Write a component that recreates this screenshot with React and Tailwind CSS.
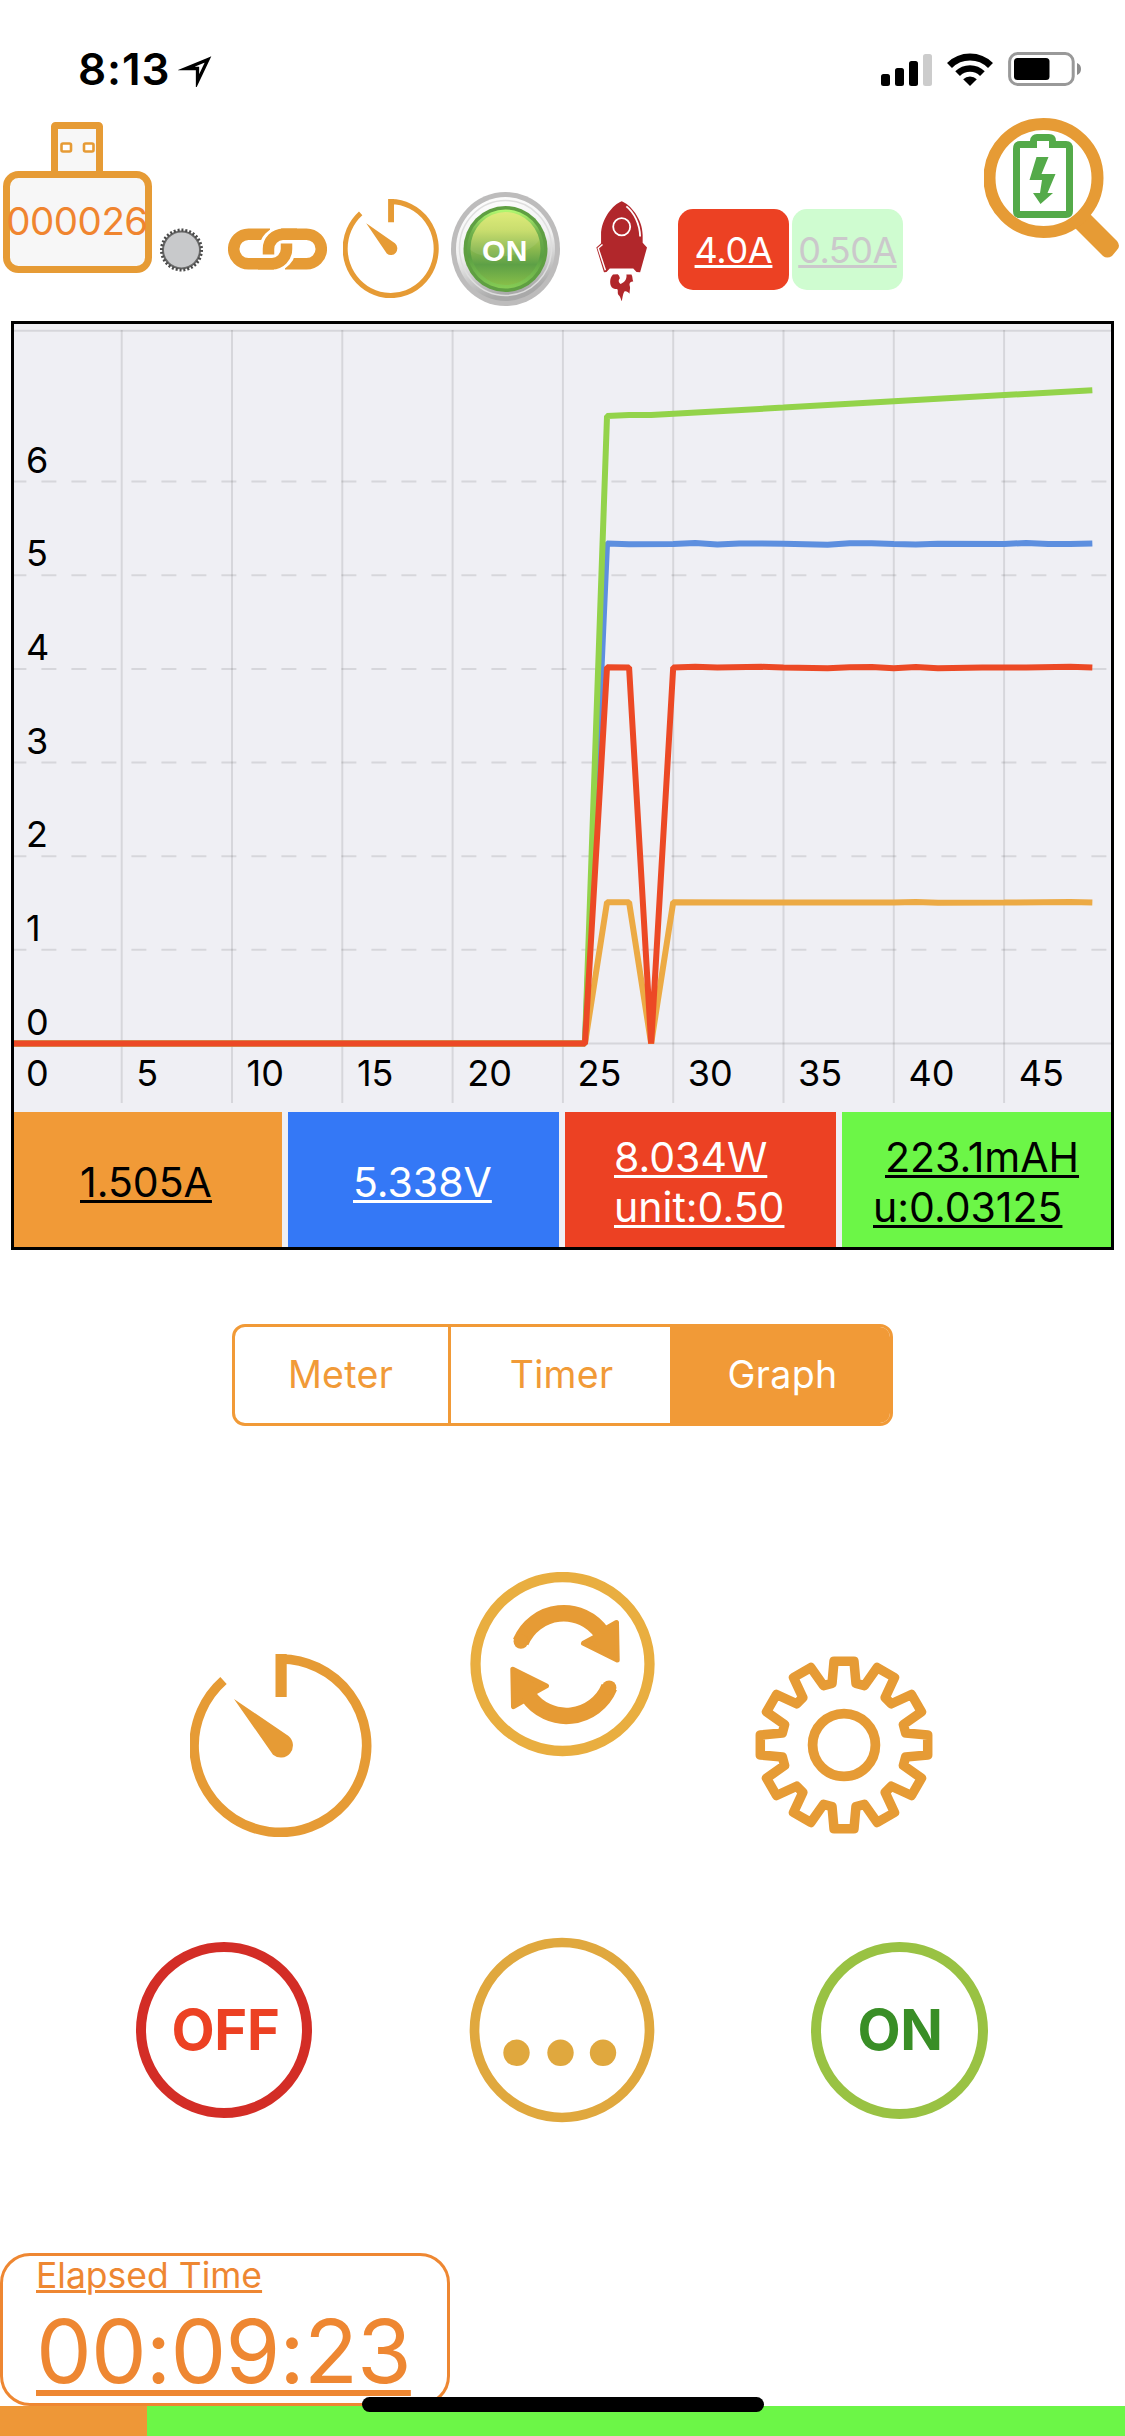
const X_STEP = 22.06;
const Y_STEP = 93.65;
const ZERO_Y = 719.5;

const xAt = (t) => t * X_STEP - 2.6;
const yAt = (v) => ZERO_Y - v * Y_STEP;

const SERIES = [
  {
    name: "voltage",
    color: "#5d8fdf",
    points: [[0, 0], [26, 0], [27, 5.338], [28, 5.332], [30, 5.333], [31, 5.345], [32, 5.328], [33, 5.34], [35, 5.336], [37, 5.325], [38, 5.342], [39, 5.342], [40, 5.334], [41, 5.328], [42, 5.337], [45, 5.334], [46, 5.345], [47, 5.333], [48, 5.333], [49, 5.34]],
  },
  {
    name: "capacity",
    color: "#93d34a",
    points: [[0, 0], [26, 0], [27, 6.7], [28, 6.712], [29, 6.712], [35, 6.79], [42, 6.885], [49, 6.975]],
  },
  {
    name: "current",
    color: "#ecaa44",
    points: [[0, 0], [26, 0], [27, 1.508], [28, 1.508], [29, 0], [30, 1.508], [34, 1.505], [40, 1.505], [41, 1.512], [42, 1.503], [45, 1.505], [48, 1.512], [49, 1.505]],
  },
  {
    name: "power",
    color: "#ec4925",
    points: [[0, 0], [26, 0], [27, 4.018], [28, 4.015], [29, 0], [30, 4.015], [31, 4.022], [32, 4.016], [34, 4.022], [35, 4.016], [37, 4.007], [38, 4.018], [39, 4.02], [40, 4.006], [41, 4.02], [42, 4.008], [44, 4.014], [46, 4.014], [48, 4.022], [49, 4.015]],
  },
];

const GEAR_POINTS = Array.from({ length: 12 }, (_, i) =>
  [[-11, 62.8], [-6.8, 84.3], [6.8, 84.3], [11, 62.8]].map(([offset, r]) => {
    const a = ((i * 30 + offset) * Math.PI) / 180;
    return `${(r * Math.sin(a)).toFixed(2)},${(-r * Math.cos(a)).toFixed(2)}`;
  })
)
  .flat()
  .join(" ");

function StatusBar() {
  return (
    <header className="flex h-[104px] items-center pt-[34px] pr-[43px] pl-[78px]">
      <span className="text-[44px] leading-none font-semibold tracking-[0.9px] text-black">8:13</span>
      <svg className="mt-1 ml-[8px] h-[32px] w-[34px]" viewBox="0 0 34 32">
        <path d="M30 4.500 L8 13.500 H19.500 V26.500 Z" fill="none" stroke="#000" strokeWidth="3.3" strokeMiterlimit="10" />
      </svg>
      <div className="ml-auto flex items-center">
        <svg className="h-[33px] w-[51px]" viewBox="0 0 51 33">
          <rect x="0" y="21" width="9" height="12" rx="2.5" />
          <rect x="14" y="15" width="9" height="18" rx="2.5" />
          <rect x="28" y="8" width="9" height="25" rx="2.5" />
          <rect x="42" y="1" width="9" height="32" rx="2.5" fill="#ccc" />
        </svg>
        <svg className="ml-[15px] h-[33px] w-[46px]" viewBox="0 0 46 33">
          <path d="M2.5 12.5 A29 29 0 0 1 43.5 12.5" fill="none" stroke="#000" strokeWidth="7" />
          <path d="M10.6 20.6 A17.5 17.5 0 0 1 35.4 20.6" fill="none" stroke="#000" strokeWidth="6.6" />
          <path d="M23 33 L16.2 26.2 A9.6 9.6 0 0 1 29.8 26.2 Z" />
        </svg>
        <svg className="ml-[15px] h-[34px] w-[74px]" viewBox="0 0 74 34">
          <rect x="1.6" y="1.6" width="63.6" height="30.8" rx="8" fill="none" stroke="#999" strokeWidth="3" />
          <rect x="6" y="6" width="35.5" height="22" rx="3.5" />
          <path d="M69 11 A6.5 6.5 0 0 1 69 23 Z" fill="#8c8c8c" />
        </svg>
      </div>
    </header>
  );
}

function UsbIcon() {
  return (
    <svg className="mt-[18px] h-[151px] w-[149px] overflow-visible" viewBox="0 0 149 151">
      <rect x="51.5" y="3.5" width="45" height="52" rx="1" fill="#f7f7f7" stroke="#e69b35" strokeWidth="7" />
      <rect x="58.5" y="21.5" width="9.5" height="8" rx="1.5" fill="#fff" stroke="#e69b35" strokeWidth="2.6" />
      <rect x="81" y="21.5" width="9.5" height="8" rx="1.5" fill="#fff" stroke="#e69b35" strokeWidth="2.6" />
      <rect x="3.5" y="52.5" width="142" height="95" rx="12" fill="#f7f7f7" stroke="#e69b35" strokeWidth="7" />
      <text x="74" y="113" textAnchor="middle" fontSize="38.5" fill="#f0852f" letterSpacing="-0.5">
        000026
      </text>
    </svg>
  );
}

function KnurledDot() {
  return (
    <svg className="mt-[124px] ml-[8px] h-[44px] w-[43px]" viewBox="0 0 43 44">
      <circle cx="21.5" cy="22" r="18.5" fill="#c8c9cb" stroke="#6a6a6a" strokeWidth="2" />
      <circle cx="21.5" cy="22" r="20" fill="none" stroke="#4a4a4a" strokeWidth="3" strokeDasharray="2 1.9" />
    </svg>
  );
}

function LinkIcon() {
  return (
    <svg className="mt-[124px] ml-[25px] h-[42px] w-[99px]" viewBox="0 0 99 42" fill="none" strokeWidth="11.5">
      <g stroke="#e69b35">
        <path d="M42 6.2 H20.5 A14.8 14.8 0 0 0 20.5 35.8 H46" />
        <path d="M57 35.8 H78.5 A14.8 14.8 0 0 0 78.5 6.2 H53" />
      </g>
      <g stroke="#fff" strokeWidth="15.5">
        <path d="M53 6.2 A14.8 14.8 0 0 0 39 21" />
        <path d="M46 35.8 A14.8 14.8 0 0 0 60 21" />
      </g>
      <g stroke="#e69b35">
        <path d="M30 35.8 H44 A14.8 14.8 0 0 0 58.5 21 V15.5" />
        <path d="M69 6.2 H55 A14.8 14.8 0 0 0 40.5 21 V26.5" />
      </g>
    </svg>
  );
}

function TimerIcon({ className }) {
  return (
    <svg className={className} viewBox="-91 -91.5 182 183" preserveAspectRatio="none">
      <path d="M0 -86.5 A86.3 86.7 0 1 1 -57.5 -65" fill="none" stroke="#e69b35" strokeWidth="9.6" />
      <path d="M-5.5 -91.5 H5.7 V-48.5 H-5.5 Z" fill="#e69b35" />
      <path d="M-47 -46.5 L7.5 -9.5 A12 12 0 1 1 -8 9.3 Z" fill="#e69b35" />
    </svg>
  );
}

function PowerButton() {
  return (
    <svg className="mt-[88px] ml-[12px] h-[114px] w-[109px]" viewBox="0 0 109 114">
      <defs>
        <linearGradient id="rim" x1="0" y1="0" x2="0.25" y2="1">
          <stop offset="0" stopColor="#fff" />
          <stop offset="0.55" stopColor="#f1f1f1" />
          <stop offset="1" stopColor="#a9a9a9" />
        </linearGradient>
        <linearGradient id="edge" x1="0" y1="0" x2="0" y2="1">
          <stop offset="0" stopColor="#b4fb72" />
          <stop offset="0.3" stopColor="#6fb04c" />
          <stop offset="0.6" stopColor="#5a9f42" />
          <stop offset="1" stopColor="#86cc55" />
        </linearGradient>
        <linearGradient id="face" x1="0" y1="0" x2="0" y2="1">
          <stop offset="0" stopColor="#dcea70" />
          <stop offset="0.25" stopColor="#c5db62" />
          <stop offset="0.5" stopColor="#8dba4f" />
          <stop offset="0.72" stopColor="#5da046" />
          <stop offset="1" stopColor="#87be49" />
        </linearGradient>
      </defs>
      <ellipse cx="54.5" cy="57" rx="54.5" ry="57" fill="#bdbcbc" />
      <ellipse cx="54.5" cy="57" rx="49.5" ry="52" fill="url(#rim)" />
      <ellipse cx="54.5" cy="56" rx="46" ry="47.5" fill="none" stroke="#dedede" strokeWidth="1.5" />
      <ellipse cx="54.5" cy="57" rx="42" ry="43" fill="#5f9f42" />
      <ellipse cx="54.5" cy="57" rx="38.5" ry="39.5" fill="url(#edge)" />
      <ellipse cx="54.5" cy="56.5" rx="35" ry="36.5" fill="url(#face)" />
      <path d="M19.500 58 C33 70 76 66 88.500 48 A35 36.5 0 0 0 19.500 58 Z" fill="#fff" opacity="0.08" />
      <text x="54" y="69.3" textAnchor="middle" fontFamily="Liberation Sans" fontWeight="700" fontSize="30" fill="#fff" letterSpacing="0.6">
        ON
      </text>
    </svg>
  );
}

function RocketIcon() {
  return (
    <svg className="mt-[97px] ml-[36px] h-[100px] w-[51px]" viewBox="100 602 141 299" preserveAspectRatio="none">
      <g fill="#b1272b">
        <path d="M171 603 C148 612 114 655 114 704 V728 L101 741 L122 815 L129 814 L138 804 H203 L212 814 L222 815 L241 741 L229 727 V704 C229 655 194 612 171 603 Z" />
        <path d="M147 822 C137 832 136 856 147 863 C153 868 159 862 160 868 C161 876 158 880 165 886 C168 891 169 897 171 902 C173 894 174 880 178 873 C183 869 188 874 193 879 C192 870 196 865 193 855 C191 847 197 842 203 843 C200 836 202 829 198 822 H184 C186 834 180 846 168 850 C162 846 161 838 166 833 C165 827 163 823 160 821 Z" />
      </g>
      <g fill="none" stroke="#fff">
        <ellipse cx="171" cy="679" rx="23.5" ry="26" strokeWidth="5" />
        <path d="M184 618 C205 636 221 670 222 708" strokeWidth="5" />
        <path d="M118 732 L106 743 L126 809" strokeWidth="4" />
      </g>
    </svg>
  );
}

function BatterySearchIcon() {
  return (
    <svg className="mt-[14px] ml-[81px] h-[140px] w-[136px]" viewBox="984 118 136 140">
      <path d="M1090 214 L1117 241 Q1121 246 1117 250 L1112 256 Q1107 259 1103 256 L1074 227 Z" fill="#e69b35" />
      <circle cx="1043.5" cy="178" r="54" fill="#fff" stroke="#e69b35" strokeWidth="12" />
      <path
        d="M1033.5 148 V141 Q1034 137.5 1037 137.5 H1049 Q1052.5 137.5 1052.5 141 V144.5 H1066 Q1069.5 144.5 1069.5 149 V211 Q1069.5 214.5 1066 214.5 H1020 Q1016.5 214.5 1016.5 211 V149 Q1016.5 144.5 1020 144.5 H1033.5"
        fill="none"
        stroke="#54aa49"
        strokeWidth="7"
      />
      <path d="M1036.5 157 H1048.5 L1041.5 174 H1055.5 L1047.5 193 H1053 L1040.5 204 L1033 193 H1040 L1042 180 H1029.5 Z" fill="#54aa49" />
    </svg>
  );
}

function Toolbar() {
  return (
    <div className="flex h-[217px] items-start pl-[3px]">
      <UsbIcon />
      <KnurledDot />
      <LinkIcon />
      <TimerIcon className="mt-[95px] ml-[16px] h-[99px] w-[96px]" />
      <PowerButton />
      <RocketIcon />
      <div className="mt-[105px] ml-[31px] flex h-[81px] w-[111px] items-center justify-center rounded-[15px] bg-[#ec4123] text-[36px] leading-none tracking-[-0.3px] text-white underline decoration-[3px] underline-offset-[2px]">
        4.0A
      </div>
      <div className="mt-[105px] ml-[3px] flex h-[81px] w-[111px] items-center justify-center rounded-[15px] bg-[#cffcd0] text-[36px] leading-none tracking-[-0.5px] text-[#cbc8cb] underline decoration-[3px] underline-offset-[2px]">
        0.50A
      </div>
      <BatterySearchIcon />
    </div>
  );
}

function Chart() {
  return (
    <svg className="block h-[788px] w-[1097px]" viewBox="0 0 1097 788">
      <g stroke="#000" strokeOpacity="0.1" strokeWidth="2">
        <path d="M0 6.7 H1097" />
        <path d={`M0 ${ZERO_Y} H1097`} />
        {[5, 10, 15, 20, 25, 30, 35, 40, 45].map((t) => (
          <line key={t} x1={xAt(t)} x2={xAt(t)} y1="6" y2="779" />
        ))}
        {[1, 2, 3, 4, 5, 6].map((v) => (
          <line key={v} x1="-2.6" x2="1097" y1={yAt(v)} y2={yAt(v)} strokeDasharray="15 15" />
        ))}
      </g>
      <g fontSize="36" fill="#000">
        {[0, 1, 2, 3, 4, 5, 6].map((v) => (
          <text key={v} x="12" y={yAt(v) - 8.8}>
            {v}
          </text>
        ))}
        {[0, 5, 10, 15, 20, 25, 30, 35, 40, 45].map((t) => (
          <text key={t} x={xAt(t) + 14.6} y="761.5">
            {t}
          </text>
        ))}
      </g>
      {SERIES.map((s) => (
        <polyline
          key={s.name}
          points={s.points.map(([t, v]) => `${xAt(t)},${yAt(v)}`).join(" ")}
          fill="none"
          stroke={s.color}
          strokeWidth="6"
          strokeLinejoin="bevel"
        />
      ))}
    </svg>
  );
}

function Readings() {
  return (
    <div className="flex h-[135px] gap-[6px] text-[41px] leading-[50px] decoration-[3px] underline-offset-[3px]">
      <div className="flex w-[268px] items-center bg-[#f19a37] pt-[4px] pl-[66px] text-black">
        <span className="underline decoration-[3px]">1.505A</span>
      </div>
      <div className="flex w-[271px] items-center bg-[#3478f6] pt-[4px] pl-[65px] text-white">
        <span className="underline decoration-[3px]">5.338V</span>
      </div>
      <div className="flex w-[271px] flex-col items-start bg-[#ec4123] pt-[20px] pl-[49px] text-white">
        <span className="underline decoration-[3px]">8.034W</span>
        <span className="underline decoration-[3px]">unit:0.50</span>
      </div>
      <div className="flex w-[269px] flex-col items-start bg-[#6cf647] pt-[20px] pl-[31px] text-black">
        <span className="ml-[12px] underline decoration-[3px]">223.1mAH</span>
        <span className="underline decoration-[3px]">u:0.03125</span>
      </div>
    </div>
  );
}

function ModeTabs() {
  return (
    <div className="mt-[74px] ml-[232px] flex h-[102px] w-[661px] overflow-hidden rounded-[13px] border-[3px] border-[#f19a37] text-[37.5px] leading-none tracking-[0.3px] text-[#f19a37]">
      <div className="flex w-[213px] items-center justify-center pr-[2px]">Meter</div>
      <div className="flex w-[222px] items-center justify-center border-l-[3px] border-[#f19a37] pl-[2px]">Timer</div>
      <div className="flex flex-1 items-center justify-center bg-[#f19a37] pl-[5px] text-white">Graph</div>
    </div>
  );
}

function RefreshIcon() {
  return (
    <svg className="h-[185px] w-[185px]" viewBox="470 1572 185 185">
      <circle cx="562.5" cy="1664" r="87" fill="none" stroke="#e9ae40" strokeWidth="10.3" />
      {[0, 180].map((angle) => (
        <g key={angle} transform={`rotate(${angle} 565 1664.6)`} stroke="#e69b35">
          <path d="M520.7 1642 A46.5 46.5 0 0 1 602 1633.5" fill="none" strokeWidth="16.5" />
          <circle cx="520.9" cy="1641.5" r="7.3" fill="#e69b35" stroke="none" />
          <path
            d="M616.5 1622.5 L617.2 1660 L583.5 1643.3 L597 1636 L606 1628.5 Z"
            fill="#e69b35"
            strokeWidth="5"
            strokeLinejoin="round"
          />
        </g>
      ))}
    </svg>
  );
}

function GearIcon() {
  return (
    <svg className="mt-[84px] h-[178px] w-[178px]" viewBox="-89 -89 178 178" fill="none" stroke="#e69b35">
      <polygon points={GEAR_POINTS} strokeWidth="9.5" strokeLinejoin="round" />
      <circle r="31.4" strokeWidth="9.8" />
    </svg>
  );
}

function Controls() {
  return (
    <div className="mt-[146px] h-[681px]">
      <div className="flex items-start pl-[190px]">
        <TimerIcon className="mt-[82px] h-[183px] w-[182px]" />
        <div className="mr-[100px] ml-[98px]">
          <RefreshIcon />
        </div>
        <GearIcon />
      </div>
      <div className="mt-[100px] flex items-center pl-[136px]">
        <div className="flex size-[176px] items-center justify-center rounded-full border-[10px] border-[#d32d26] pl-[3px] text-[56px] leading-none font-bold tracking-[-0.3px] text-[#ec4123]">
          OFF
        </div>
        <svg className="ml-[157px] h-[186px] w-[186px]" viewBox="0 0 186 186" fill="#e0a83e">
          <circle cx="93" cy="93" r="87.5" fill="none" stroke="#e0a83e" strokeWidth="9.7" />
          <circle cx="47.5" cy="115.8" r="13.2" />
          <circle cx="91.5" cy="115.8" r="13.2" />
          <circle cx="134" cy="115.8" r="13.2" />
        </svg>
        <div className="ml-[156px] flex size-[177px] items-center justify-center rounded-full border-[10px] border-[#99c243] pl-[1px] text-[56px] leading-none font-bold tracking-[-0.5px] text-[#398e26]">
          ON
        </div>
      </div>
    </div>
  );
}

function ElapsedTime() {
  return (
    <div className="h-[153px] w-[450px] rounded-[30px] border-[3px] border-[#ee8732] pl-[33px] text-[#ee8732]">
      <div className="flex h-[40px] items-center">
        <span className="text-[35.5px] leading-none underline decoration-[3px] underline-offset-[2px]">Elapsed Time</span>
      </div>
      <div className="flex h-[110px] items-center">
        <span className="text-[88.5px] leading-none tracking-[-0.9px] underline decoration-[6px] underline-offset-[7px]">
          00:09:23
        </span>
      </div>
    </div>
  );
}

export default function App() {
  return (
    <div className="relative flex h-[2436px] w-[1125px] flex-col overflow-hidden bg-white font-['Inter',sans-serif]">
      <StatusBar />
      <Toolbar />
      <section className="ml-[11px] h-[929px] w-[1103px] border-[3px] border-black bg-[#efeff4]">
        <Chart />
        <Readings />
      </section>
      <ModeTabs />
      <Controls />
      <ElapsedTime />
      <footer className="flex h-[30px]">
        <div className="w-[147px] bg-[#ee9737]" />
        <div className="flex-1 bg-[#6cf647]" />
      </footer>
      <div className="absolute bottom-[24px] left-[362px] h-[15px] w-[402px] rounded-full bg-black" />
    </div>
  );
}
